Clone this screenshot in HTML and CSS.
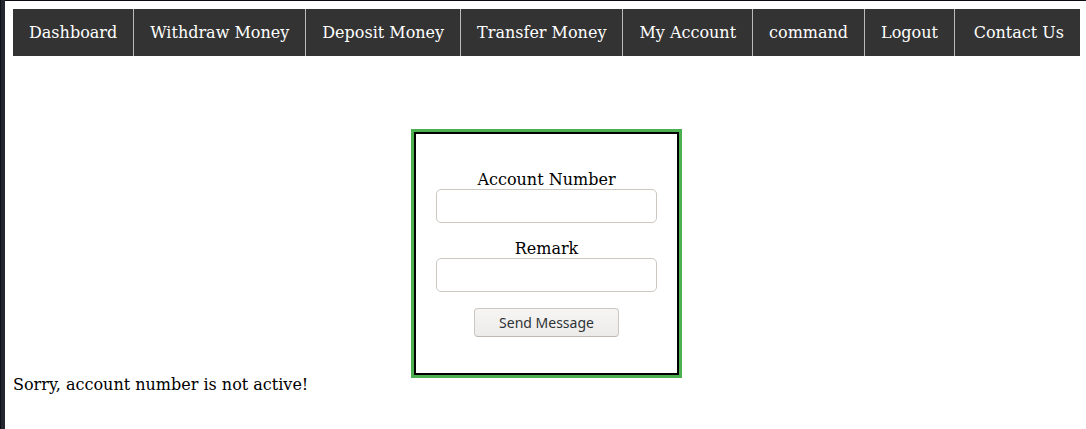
FILE: index.html
```html
<!DOCTYPE html>
<html lang="en">
<head>
<meta charset="utf-8">
<title>Contact Us</title>
<link rel="stylesheet" href="styles.css">
</head>
<body>
<div class="page">
  <nav>
    <ul class="menu">
      <li><a href="#">Dashboard</a></li>
      <li><a href="#">Withdraw Money</a></li>
      <li><a href="#">Deposit Money</a></li>
      <li><a href="#">Transfer Money</a></li>
      <li><a href="#">My Account</a></li>
      <li><a href="#">command</a></li>
      <li><a href="#">Logout</a></li>
      <li class="menu-end"><a href="#">Contact Us</a></li>
    </ul>
  </nav>
  <main>
    <form class="contact">
      <div class="field">
        <label for="account">Account Number</label>
        <input type="text" id="account">
      </div>
      <div class="field">
        <label for="remark">Remark</label>
        <input type="text" id="remark">
      </div>
      <button type="button" class="send">Send Message</button>
    </form>
    <div class="message">Sorry, account number is not active!</div>
  </main>
</div>
</body>
</html>
```

FILE: styles.css
```css
* {
  box-sizing: border-box;
}

body {
  margin: 0;
  background: #fff;
  color: #000;
  font: 16px/19px "DejaVu Serif", serif;
}

.page {
  min-height: 100vh;
  padding: 8px 6px 8px 8px;
  border-top: 1px solid #0b0a12;
  border-left: 5px solid #23252f;
  box-shadow: inset 0 0 0 0 #fff;
  border-image: linear-gradient(to right, #101118 1px, #23252f 1px, #23252f 5px, #0b0a12 5px) 1 0 0 5;
}

.menu {
  display: flex;
  margin: 0;
  padding: 0;
  list-style: none;
  background: #333;
}

.menu li {
  border-right: 1px solid #bbb;
}

.menu li:nth-last-child(2) {
  margin-right: auto;
}

.menu .menu-end {
  border-right: 0;
}

.menu a {
  display: block;
  padding: 14px 16px;
  color: #fff;
  text-decoration: none;
  white-space: nowrap;
}

.contact {
  display: flex;
  flex-direction: column;
  align-items: center;
  gap: 16px;
  width: fit-content;
  margin: 76px auto 0;
  padding: 36px 20px;
  border: 2px solid #000;
  outline: 3px solid #4caf50;
}

.field {
  display: flex;
  flex-direction: column;
  text-align: center;
}

.field input {
  width: 221px;
  height: 34px;
  padding: 0 8px;
  border: 1px solid #cdc7c2;
  border-radius: 5px;
  background: #fff;
  font: 15px "Noto Sans", sans-serif;
}

.send {
  height: 29px;
  padding: 0 24px;
  border: 1px solid #cdc7c2;
  border-bottom-color: #bfb8b1;
  border-radius: 4px;
  background: linear-gradient(#f6f5f4, #edebe9);
  color: #2e3436;
  font: 14px "Noto Sans", sans-serif;
}
```
